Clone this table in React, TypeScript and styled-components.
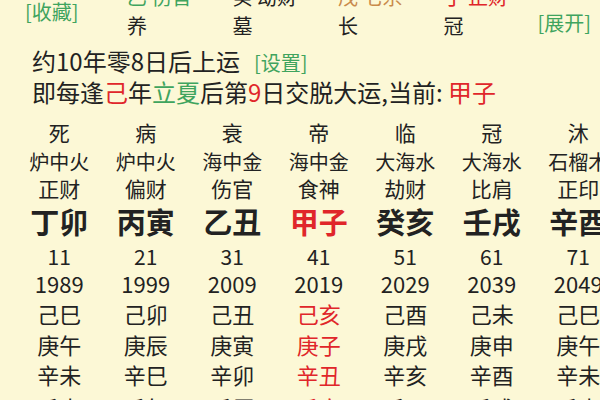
import React from 'react';
import styled, { createGlobalStyle } from 'styled-components';

const Global = createGlobalStyle`
  html, body { margin: 0; padding: 0; background: #fcf8d6; overflow: hidden; }
  body { font-family: "Noto Sans CJK SC", "Noto Sans", sans-serif; color: #222; }
`;

const Page = styled.div`
  width: 600px;
  height: 400px;
  overflow: hidden;
  background: #fcf8d6;
  display: flex;
  flex-direction: column;
`;

const TopTable = styled.div`
  margin-top: -19px;
  display: grid;
  grid-template-columns: 127px 105.5px 105.5px 105.5px 94px 1fr;
  grid-template-rows: 31px 27px;
`;

const Link = styled.span`
  color: #3fa45e;
  font-size: 20px;
  line-height: 1;
  white-space: nowrap;
`;

const SaveCell = styled.div`
  grid-column: 1;
  grid-row: 1 / span 2;
  align-self: center;
  padding-left: 25px;
  margin-top: 6px;
`;

const ExpandCell = styled.div`
  grid-column: 6;
  grid-row: 2;
  justify-self: start;
  align-self: center;
  margin-bottom: 3px;
`;

const TopCell = styled.div<{ $color: string }>`
  display: flex;
  align-items: center;
  font-size: 20px;
  line-height: 1;
  white-space: nowrap;
  color: ${(p) => p.$color};
`;

const Header = styled.div`
  padding: 7px 0 0 32px;
`;

const Line = styled.div<{ $h: number }>`
  height: ${(p) => p.$h}px;
  line-height: ${(p) => p.$h}px;
  font-size: 24px;
  white-space: nowrap;
`;

const Hl = styled.span<{ $color: string }>`
  color: ${(p) => p.$color};
`;

const Settings = styled(Link)`
  margin-left: 14px;
`;

const Grid = styled.div<{ $rows: string }>`
  margin-top: 9px;
  padding-left: 16px;
  display: grid;
  grid-template-columns: repeat(7, 86.5px);
  grid-template-rows: ${(p) => p.$rows};
`;

const Cell = styled.div<{ $size: number; $bold?: boolean; $red?: boolean }>`
  display: flex;
  align-items: center;
  justify-content: center;
  white-space: nowrap;
  line-height: 1;
  font-size: ${(p) => p.$size}px;
  font-weight: ${(p) => (p.$bold ? 700 : 400)};
  color: ${(p) => (p.$red ? '#e0262a' : '#222')};
`;

type Col = string[];

const columns: Col[] = [
  ['死', '炉中火', '正财', '丁卯', '11', '1989', '己巳', '庚午', '辛未', '壬申'],
  ['病', '炉中火', '偏财', '丙寅', '21', '1999', '己卯', '庚辰', '辛巳', '壬午'],
  ['衰', '海中金', '伤官', '乙丑', '31', '2009', '己丑', '庚寅', '辛卯', '壬辰'],
  ['帝', '海中金', '食神', '甲子', '41', '2019', '己亥', '庚子', '辛丑', '壬寅'],
  ['临', '大海水', '劫财', '癸亥', '51', '2029', '己酉', '庚戌', '辛亥', '壬子'],
  ['冠', '大海水', '比肩', '壬戌', '61', '2039', '己未', '庚申', '辛酉', '壬戌'],
  ['沐', '石榴木', '正印', '辛酉', '71', '2049', '己巳', '庚午', '辛未', '壬申'],
];

const rows = [
  { size: 21, h: 30 },
  { size: 20, h: 30 },
  { size: 21, h: 22 },
  { size: 29, h: 44, bold: true, redable: true },
  { size: 21, h: 26 },
  { size: 22, h: 28 },
  { size: 22, h: 31, redable: true },
  { size: 22, h: 31, redable: true },
  { size: 22, h: 30, redable: true },
  { size: 22, h: 36, redable: true },
];

const currentCol = 3;

const topRow1 = [
  { t: '乙 伤官', c: '#3fa45e' },
  { t: '癸 劫财', c: '#222' },
  { t: '戊 七杀', c: '#c98a4b' },
  { t: '丁 正财', c: '#e0262a' },
];
const topRow2 = ['养', '墓', '长', '冠'];

export default function App() {
  return (
    <Page>
      <Global />
      <TopTable>
        <SaveCell>
          <Link>[收藏]</Link>
        </SaveCell>
        {topRow1.map((c, i) => (
          <TopCell key={'a' + i} $color={c.c} style={{ gridColumn: i + 2, gridRow: 1 }}>
            {c.t}
          </TopCell>
        ))}
        {topRow2.map((t, i) => (
          <TopCell key={'b' + i} $color="#222" style={{ gridColumn: i + 2, gridRow: 2 }}>
            {t}
          </TopCell>
        ))}
        <ExpandCell>
          <Link>[展开]</Link>
        </ExpandCell>
      </TopTable>
      <Header>
        <Line $h={30}>
          约10年零8日后上运<Settings>[设置]</Settings>
        </Line>
        <Line $h={32}>
          即每逢<Hl $color="#e0262a">己</Hl>年<Hl $color="#3fa45e">立夏</Hl>后第
          <Hl $color="#e0262a">9</Hl>日交脱大运,当前: <Hl $color="#e0262a">甲子</Hl>
        </Line>
      </Header>
      <Grid $rows={rows.map((r) => r.h + 'px').join(' ')}>
        {rows.map((r, ri) =>
          columns.map((col, ci) => (
            <Cell
              key={ri + '-' + ci}
              $size={r.size}
              $bold={r.bold}
              $red={!!r.redable && ci === currentCol}
            >
              {col[ri]}
            </Cell>
          ))
        )}
      </Grid>
    </Page>
  );
}
